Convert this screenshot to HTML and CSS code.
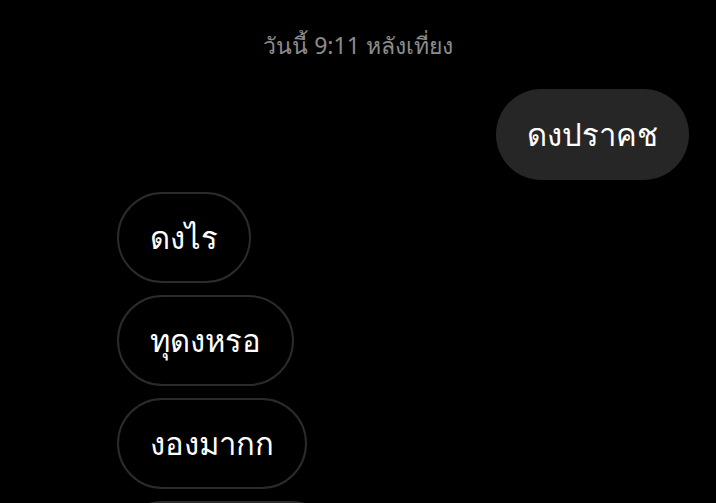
FILE: index.html
```html
<!DOCTYPE html>
<html lang="th">
<head>
<meta charset="utf-8">
<link rel="stylesheet" href="styles.css">
</head>
<body>
<div class="chat">
  <div class="time">วันนี้ 9:11 หลังเที่ยง</div>
  <div class="row out"><div class="bubble sent">ดงปราคช</div></div>
  <div class="row in"><div class="bubble recv">ดงไร</div></div>
  <div class="row in"><div class="bubble recv">ทุดงหรอ</div></div>
  <div class="row in"><div class="bubble recv">งองมากก</div></div>
  <div class="row in"><div class="bubble recv partial"></div></div>
</div>
</body>
</html>
```
FILE: styles.css
```css
html, body {
  margin: 0;
  padding: 0;
  background: #000;
  width: 716px;
  height: 503px;
  overflow: hidden;
}
.chat {
  font-family: "Noto Sans", "DejaVu Sans", sans-serif;
  display: flex;
  flex-direction: column;
  padding: 0 27px 0 117px;
}
.time {
  color: #8c8c8c;
  font-size: 23px;
  text-align: center;
  height: 24px;
  line-height: 24px;
  margin-top: 33px;
  margin-left: -117px;
  margin-right: -27px;
}
.row {
  display: flex;
}
.row.out {
  justify-content: flex-end;
  margin-top: 32px;
}
.row.in {
  margin-top: 12px;
}
.bubble {
  box-sizing: border-box;
  height: 91px;
  border-radius: 46px;
  padding: 0 31px;
  display: flex;
  align-items: center;
  color: #fff;
  font-size: 31px;
  white-space: nowrap;
}
.sent {
  background: #262626;
}
.recv {
  border: 2px solid #2b2b2b;
}
.partial {
  width: 220px;
}
```
